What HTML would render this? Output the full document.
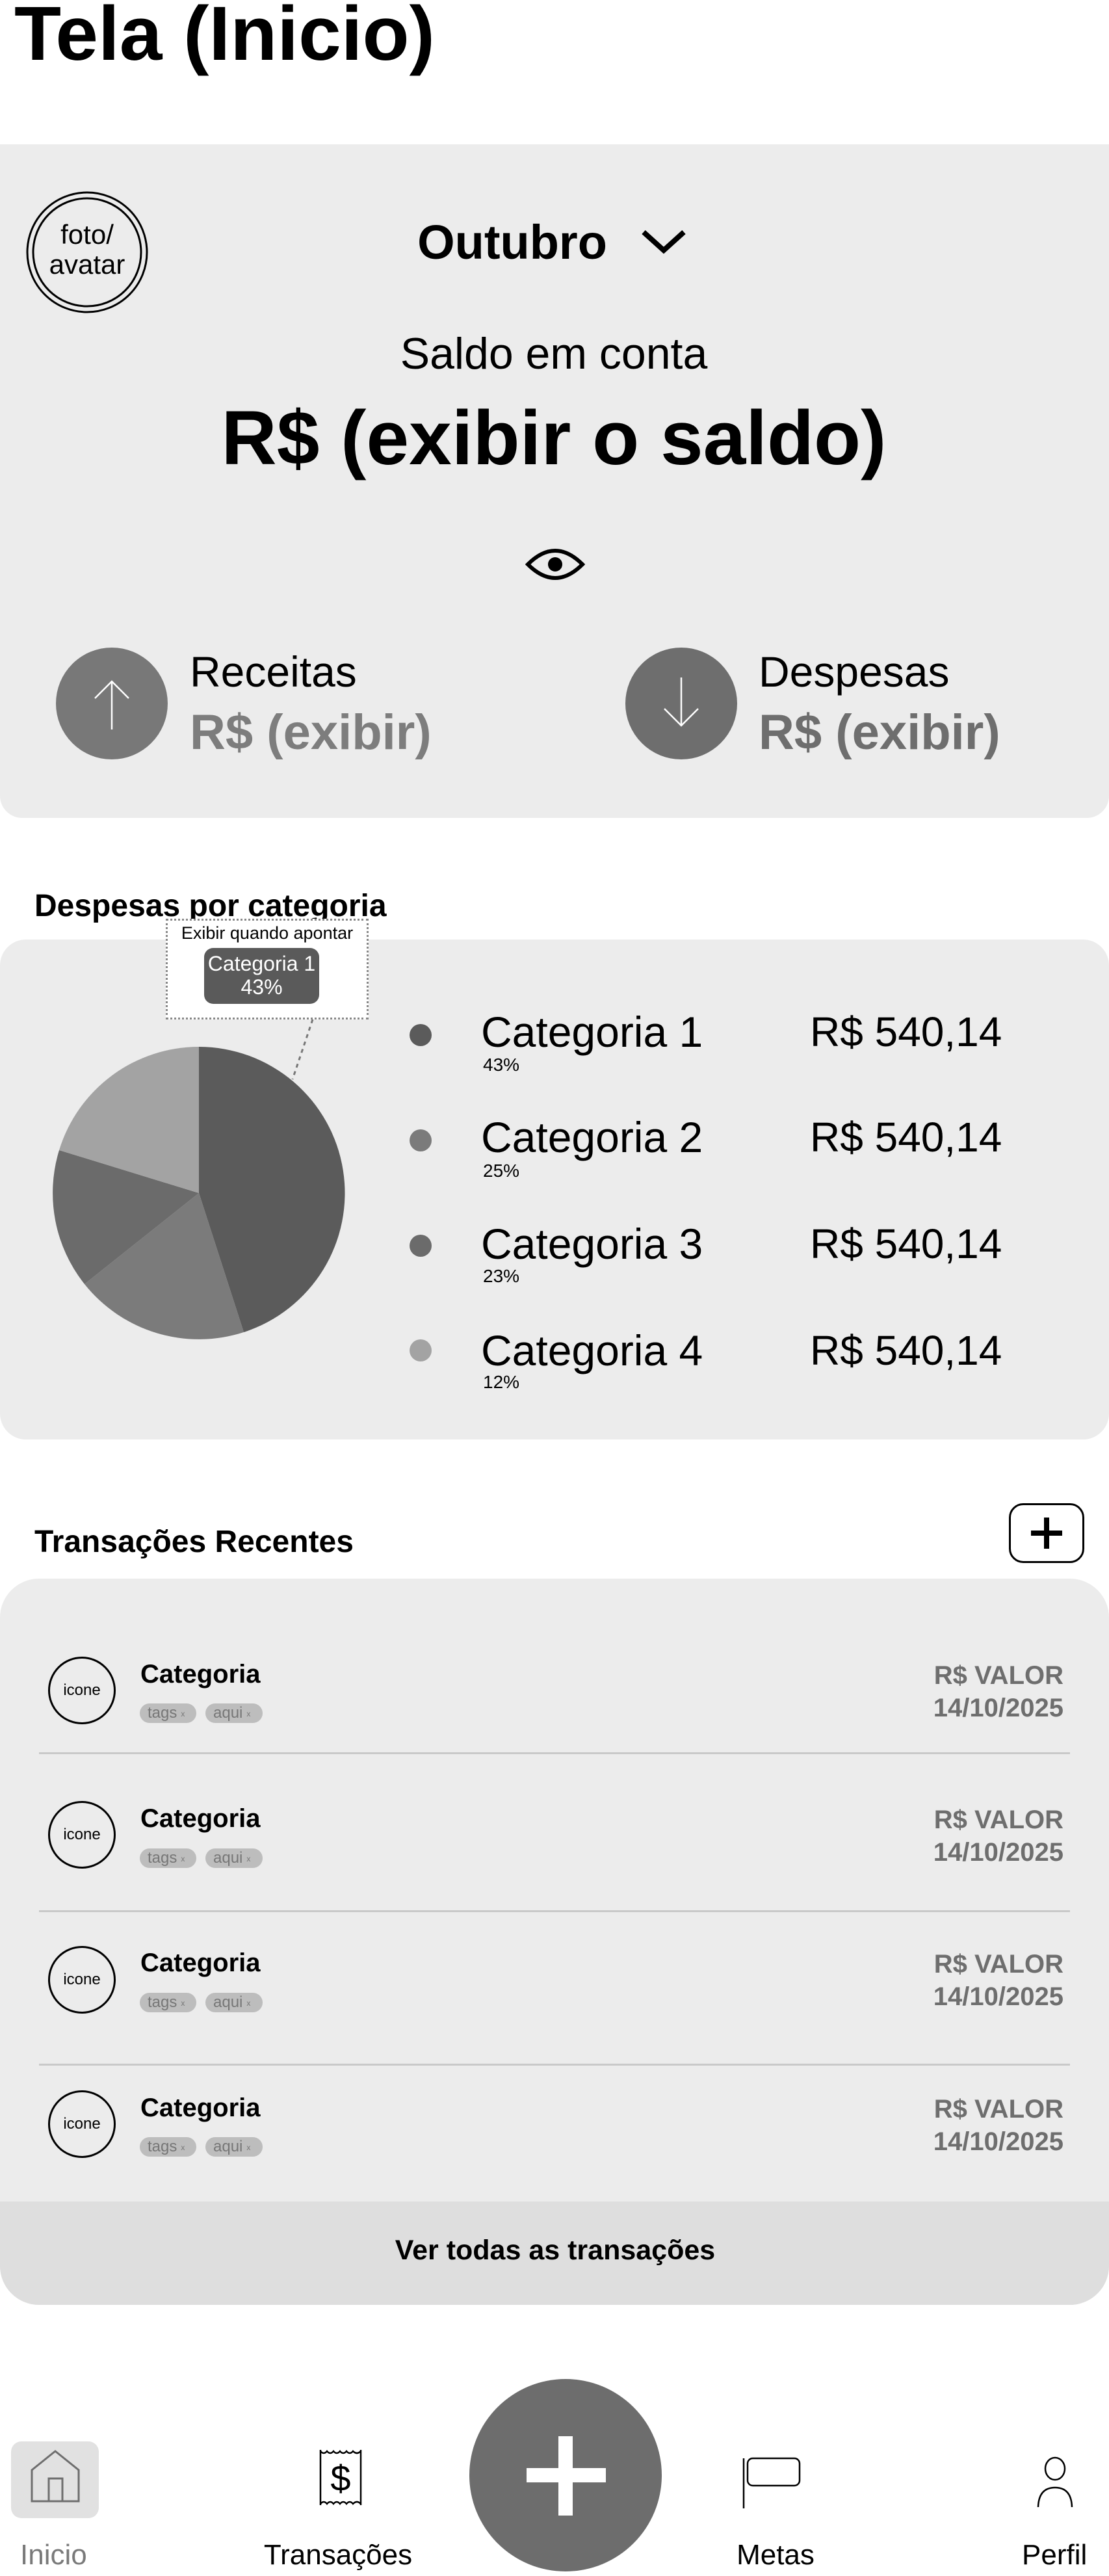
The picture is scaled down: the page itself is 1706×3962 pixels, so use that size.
<!DOCTYPE html>
<html><head><meta charset="utf-8">
<style>
*{margin:0;padding:0;box-sizing:border-box}
body{width:1706px;height:3962px;background:#fff;position:relative;overflow:hidden;font-family:"Liberation Sans",Arial,sans-serif;color:#000}
.a{position:absolute;white-space:nowrap}
.c{transform:translateX(-50%)}
.card{position:absolute;background:#ececec}
.dot{position:absolute;width:34px;height:34px;border-radius:50%}
.cat{font-size:66px;left:740px}
.pct{font-size:28px;left:743px}
.val{font-size:64px;left:1246px}
.ic{position:absolute;left:74px;width:104px;height:104px;border:3px solid #000;border-radius:50%;font-size:24px;display:flex;align-items:center;justify-content:center}
.tc{font-size:40px;font-weight:bold;left:216px}
.tag{position:absolute;height:30px;background:#bdbdbd;border-radius:15px;color:#777;font-size:24px;line-height:30px;padding-left:12px}
.tag span{font-size:12px;margin-left:6px;vertical-align:middle}
.rv{font-size:40px;font-weight:bold;color:#6e6e6e;right:70px;text-align:right}
.hr{position:absolute;left:60px;width:1586px;height:3px;background:#c9c9c9}
.nav{font-size:44px;top:3905px}
</style></head><body>

<div class="a" style="left:22px;top:-16px;font-size:118px;font-weight:bold">Tela (Inicio)</div>

<!-- top card -->
<div class="card" style="left:0;top:222px;width:1706px;height:1036px;border-radius:0 0 34px 34px"></div>
<svg class="a" style="left:38px;top:292px" width="192" height="192"><circle cx="96" cy="96" r="92" fill="none" stroke="#000" stroke-width="3"/><circle cx="96" cy="96" r="83" fill="none" stroke="#000" stroke-width="3"/></svg>
<div class="a c" style="left:134px;top:338px;font-size:42px;line-height:46px;text-align:center">foto/<br>avatar</div>
<div class="a c" style="left:788px;top:330px;font-size:74px;font-weight:bold">Outubro</div>
<svg class="a" style="left:985px;top:352px" width="72" height="40"><path d="M5 5 L36 33 L67 5" fill="none" stroke="#000" stroke-width="8"/></svg>
<div class="a c" style="left:852px;top:505px;font-size:68px">Saldo em conta</div>
<div class="a c" style="left:852px;top:606px;font-size:118px;font-weight:bold">R$ (exibir o saldo)</div>
<svg class="a" style="left:808px;top:840px" width="92" height="56"><path d="M4 28 Q46 -14 88 28 Q46 70 4 28Z" fill="none" stroke="#000" stroke-width="6"/><circle cx="46" cy="28" r="11" fill="#000"/></svg>

<div class="a" style="left:86px;top:996px;width:172px;height:172px;border-radius:50%;background:#787878"></div>
<svg class="a" style="left:86px;top:996px" width="172" height="172"><path d="M86 126 V52 M60 78 L86 52 L112 78" fill="none" stroke="#fff" stroke-width="2.5"/></svg>
<div class="a" style="left:292px;top:995px;font-size:66px">Receitas</div>
<div class="a" style="left:292px;top:1083px;font-size:76px;font-weight:bold;color:#7d7d7d">R$ (exibir)</div>

<div class="a" style="left:962px;top:996px;width:172px;height:172px;border-radius:50%;background:#6e6e6e"></div>
<svg class="a" style="left:962px;top:996px" width="172" height="172"><path d="M86 46 V120 M60 94 L86 120 L112 94" fill="none" stroke="#fff" stroke-width="2.5"/></svg>
<div class="a" style="left:1167px;top:995px;font-size:66px">Despesas</div>
<div class="a" style="left:1167px;top:1083px;font-size:76px;font-weight:bold;color:#6e6e6e">R$ (exibir)</div>

<!-- chart -->
<div class="a" style="left:53px;top:1366px;font-size:48px;font-weight:bold">Despesas por categoria</div>
<div class="card" style="left:0;top:1445px;width:1706px;height:769px;border-radius:40px"></div>
<div class="a" style="left:255px;top:1413px;width:312px;height:155px;background:#fff;border:3px dotted #888"></div>
<div class="a c" style="left:411px;top:1420px;font-size:27px">Exibir quando apontar</div>
<div class="a" style="left:314px;top:1458px;width:177px;height:86px;background:#5a5a5a;border-radius:14px;color:#fff;font-size:32px;line-height:36px;text-align:center;padding-top:6px">Categoria 1<br>43%</div>
<svg class="a" style="left:0;top:1560px" width="600" height="520">
<path d="M481 8 L450 100" stroke="#777" stroke-width="3" stroke-dasharray="6 6"/>
<g transform="translate(306,275)">
<path d="M0 0 L0 -225 A225 225 0 0 1 69 214 Z" fill="#5b5b5b"/>
<path d="M0 0 L69 214 A225 225 0 0 1 -176 140 Z" fill="#7b7b7b"/>
<path d="M0 0 L-176 140 A225 225 0 0 1 -215 -66 Z" fill="#6b6b6b"/>
<path d="M0 0 L-215 -66 A225 225 0 0 1 0 -225 Z" fill="#a3a3a3"/>
</g></svg>

<div class="dot" style="left:630px;top:1575px;background:#5b5b5b"></div>
<div class="a cat" style="top:1549px">Categoria 1</div><div class="a pct" style="top:1622px">43%</div><div class="a val" style="top:1550px">R$ 540,14</div>
<div class="dot" style="left:630px;top:1737px;background:#7b7b7b"></div>
<div class="a cat" style="top:1711px">Categoria 2</div><div class="a pct" style="top:1785px">25%</div><div class="a val" style="top:1712px">R$ 540,14</div>
<div class="dot" style="left:630px;top:1899px;background:#6b6b6b"></div>
<div class="a cat" style="top:1875px">Categoria 3</div><div class="a pct" style="top:1947px">23%</div><div class="a val" style="top:1876px">R$ 540,14</div>
<div class="dot" style="left:630px;top:2060px;background:#a3a3a3"></div>
<div class="a cat" style="top:2039px">Categoria 4</div><div class="a pct" style="top:2110px">12%</div><div class="a val" style="top:2040px">R$ 540,14</div>

<!-- transactions -->
<div class="a" style="left:53px;top:2344px;font-size:48px;font-weight:bold">Transações Recentes</div>
<div class="a" style="left:1552px;top:2312px;width:116px;height:92px;border:3px solid #000;border-radius:22px"></div>
<svg class="a" style="left:1552px;top:2312px" width="116" height="92"><path d="M58 22 V70 M34 46 H82" stroke="#000" stroke-width="8"/></svg>

<div class="card" style="left:0;top:2428px;width:1706px;height:1117px;border-radius:60px;overflow:hidden">
<div style="position:absolute;left:0;top:958px;width:1706px;height:160px;background:#dedede"></div>
</div>
<div class="a c" style="left:854px;top:3437px;font-size:43px;font-weight:bold">Ver todas as transações</div>

<div class="ic" style="top:2548px">icone</div>
<div class="a tc" style="top:2553px">Categoria</div>
<div class="tag" style="left:215px;top:2620px;width:87px">tags<span>x</span></div><div class="tag" style="left:316px;top:2620px;width:88px">aqui<span>x</span></div>
<div class="a rv" style="top:2555px">R$ VALOR</div><div class="a rv" style="top:2605px">14/10/2025</div>
<div class="hr" style="top:2695px"></div>

<div class="ic" style="top:2770px">icone</div>
<div class="a tc" style="top:2775px">Categoria</div>
<div class="tag" style="left:215px;top:2843px;width:87px">tags<span>x</span></div><div class="tag" style="left:316px;top:2843px;width:88px">aqui<span>x</span></div>
<div class="a rv" style="top:2777px">R$ VALOR</div><div class="a rv" style="top:2827px">14/10/2025</div>
<div class="hr" style="top:2938px"></div>

<div class="ic" style="top:2993px">icone</div>
<div class="a tc" style="top:2997px">Categoria</div>
<div class="tag" style="left:215px;top:3065px;width:87px">tags<span>x</span></div><div class="tag" style="left:316px;top:3065px;width:88px">aqui<span>x</span></div>
<div class="a rv" style="top:2999px">R$ VALOR</div><div class="a rv" style="top:3049px">14/10/2025</div>
<div class="hr" style="top:3174px"></div>

<div class="ic" style="top:3215px">icone</div>
<div class="a tc" style="top:3220px">Categoria</div>
<div class="tag" style="left:215px;top:3287px;width:87px">tags<span>x</span></div><div class="tag" style="left:316px;top:3287px;width:88px">aqui<span>x</span></div>
<div class="a rv" style="top:3222px">R$ VALOR</div><div class="a rv" style="top:3272px">14/10/2025</div>

<!-- bottom nav -->
<div class="a" style="left:17px;top:3755px;width:135px;height:118px;background:#e1e1e1;border-radius:16px"></div>
<svg class="a" style="left:17px;top:3755px" width="135" height="118"><path d="M32 44 L68 15 L104 44 V92 H32 Z M58 92 V57 H79 V92" fill="none" stroke="#6e6e6e" stroke-width="3"/></svg>
<div class="a nav" style="left:31px;color:#7a7a7a">Inicio</div>

<svg class="a" style="left:488px;top:3765px" width="72" height="92">
<path d="M5 3 V88 M67 3 V88" stroke="#000" stroke-width="2.5"/>
<path d="M5 5 q5 6 10 0 q5 6 10 0 q5 6 10 0 q5 6 10 0 q5 6 10 0 q6 6 12 0" fill="none" stroke="#000" stroke-width="2.5"/>
<path d="M5 86 q5 -6 10 0 q5 -6 10 0 q5 -6 10 0 q5 -6 10 0 q5 -6 10 0 q6 -6 12 0" fill="none" stroke="#000" stroke-width="2.5"/>
<text x="36" y="66" font-size="56" text-anchor="middle" font-family="Liberation Sans, sans-serif">$</text>
</svg>
<div class="a nav c" style="left:520px">Transações</div>

<div class="a" style="left:722px;top:3659px;width:296px;height:296px;border-radius:50%;background:#6d6d6d"></div>
<svg class="a" style="left:722px;top:3659px" width="296" height="296"><path d="M148 88 V210 M88 148 H210" stroke="#fff" stroke-width="22"/></svg>

<svg class="a" style="left:1140px;top:3778px" width="96" height="82"><path d="M4 3 V80" stroke="#000" stroke-width="2.5"/><rect x="10" y="3" width="80" height="42" rx="8" fill="none" stroke="#000" stroke-width="2.5"/></svg>
<div class="a nav c" style="left:1193px">Metas</div>

<svg class="a" style="left:1592px;top:3778px" width="62" height="80"><ellipse cx="31" cy="19" rx="15" ry="17" fill="none" stroke="#000" stroke-width="2.5"/><path d="M5 78 Q6 48 31 48 Q56 48 57 78" fill="none" stroke="#000" stroke-width="2.5"/></svg>
<div class="a nav" style="left:1572px">Perfil</div>
</body></html>
